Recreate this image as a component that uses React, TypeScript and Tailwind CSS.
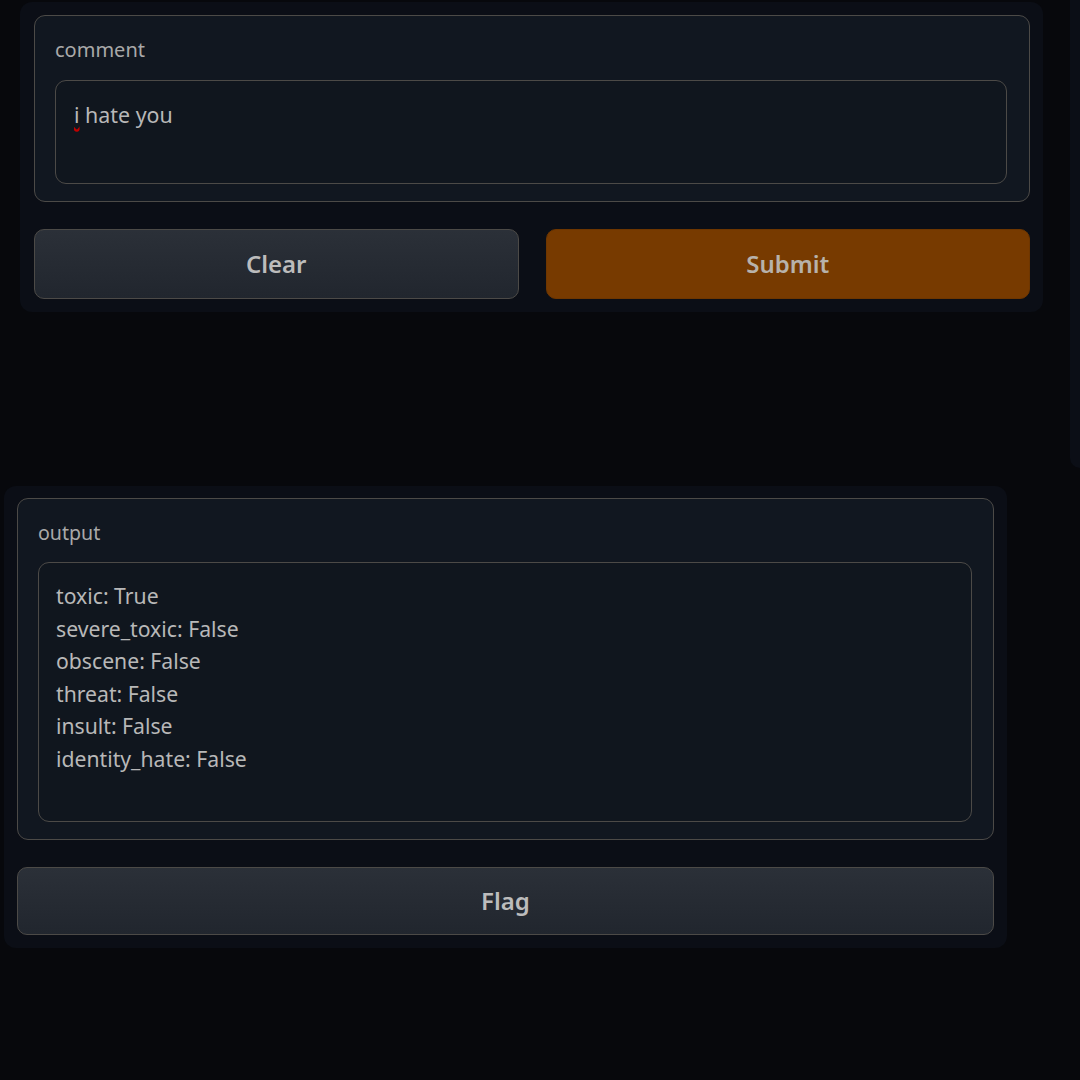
import React from "react";

const font = { fontFamily: '"Noto Sans", "Open Sans", sans-serif' };

export default function App() {
  const lines = [
    "toxic: True",
    "severe_toxic: False",
    "obscene: False",
    "threat: False",
    "insult: False",
    "identity_hate: False",
  ];
  return (
    <div
      className="w-[1080px] h-[1080px] overflow-hidden bg-[#07080c] text-[#b4b4b4]"
      style={font}
    >
      <div className="flex items-start h-[468px]">
        <div className="ml-[20px] mt-[2px] w-[1023px] rounded-[12px] bg-[#0b0e16] pl-[14px] pr-[13px] pt-[13px] pb-[13px] flex flex-col gap-[27px]">
          <div className="rounded-[11px] border border-[#4c4a47] bg-[#111720] pl-[20px] pr-[22px] pt-[21px] pb-[17px]">
            <div className="text-[20px] leading-[26px] text-[#a9a9a9]">comment</div>
            <div className="mt-[17px] h-[104px] rounded-[11px] border border-[#4c4a47] bg-[#10161e] px-[18px] py-[17px] text-[21.4px] leading-[34px] text-[#b8b8b8]">
              <span className="underline decoration-wavy decoration-[#c00000] underline-offset-2">i</span> hate you
            </div>
          </div>
          <div className="flex gap-[27px]">
            <button className="flex-1 h-[70px] rounded-[10px] border border-[#4c4a47] bg-gradient-to-b from-[#2b3038] to-[#21262e] text-[24px] font-semibold text-[#bcbcbc]">
              Clear
            </button>
            <button className="flex-1 h-[70px] rounded-[10px] border border-[#6e3600] bg-[#773a00] text-[24px] font-semibold text-[#b7b2ab]">
              Submit
            </button>
          </div>
        </div>
        <div className="ml-[27px] h-[468px] flex-1 rounded-bl-[12px] bg-[#0b0e16]" />
      </div>
      <div className="mt-[18px] ml-[4px] w-[1003px] rounded-[12px] bg-[#0b0e16] p-[13px] pt-[12px] flex flex-col gap-[27px]">
        <div className="rounded-[11px] border border-[#4c4a47] bg-[#111720] pl-[20px] pr-[21px] pt-[21px] pb-[17px]">
          <div className="text-[19.6px] leading-[26px] text-[#a9a9a9]">output</div>
          <div className="mt-[16px] h-[260px] rounded-[11px] border border-[#4c4a47] bg-[#10161e] px-[17px] pt-[17px] text-[21.2px] leading-[32.6px] text-[#b8b8b8]">
            {lines.map((l) => (
              <div key={l}>{l}</div>
            ))}
          </div>
        </div>
        <button className="h-[68px] rounded-[10px] border border-[#4c4a47] bg-gradient-to-b from-[#2b3038] to-[#21262e] text-[24px] font-semibold text-[#bcbcbc]">
          Flag
        </button>
      </div>
    </div>
  );
}
